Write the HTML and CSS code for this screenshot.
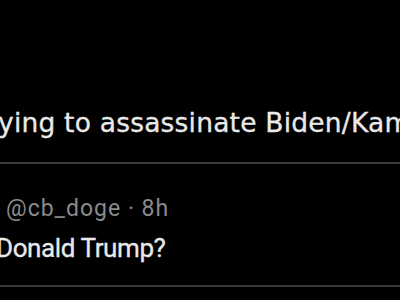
FILE: index.html
```html
<!DOCTYPE html>
<html>
<head>
<meta charset="utf-8">
<link rel="stylesheet" href="styles.css">
</head>
<body>
<div class="feed">
  <div class="tweet first">
    <p class="body-text big">ying to assassinate Biden/Kam</p>
  </div>
  <div class="tweet second">
    <div class="meta">@cb_doge · 8h</div>
    <p class="body-text reply">Donald Trump?</p>
  </div>
</div>
</body>
</html>
```
FILE: styles.css
```css
html, body {
  margin: 0;
  padding: 0;
  background: #000;
}
.feed {
  width: 400px;
  height: 300px;
  overflow: hidden;
  font-family: Roboto, "Liberation Sans", sans-serif;
}
.tweet {
  border-bottom: 2px solid #3a3a3a;
}
.first {
  padding-top: 107px;
  padding-bottom: 23px;
}
.second {
  padding-top: 31px;
  padding-bottom: 22px;
}
.body-text {
  margin: 0;
  color: #e9e9e9;
  white-space: nowrap;
}
.big {
  font-family: "DejaVu Sans", Roboto, sans-serif;
  font-size: 26.5px;
  line-height: 32px;
  margin-left: -2px;
  letter-spacing: 0.2px;
  -webkit-text-stroke: 0.3px #e9e9e9;
}
.meta {
  color: #8a8a8a;
  font-size: 23px;
  line-height: 28px;
  padding-left: 6px;
  letter-spacing: 1px;
  white-space: nowrap;
}
.reply {
  font-size: 26px;
  line-height: 30px;
  margin-top: 10px;
  margin-left: -4px;
  letter-spacing: -0.4px;
  -webkit-text-stroke: 0.3px #e9e9e9;
}
```
